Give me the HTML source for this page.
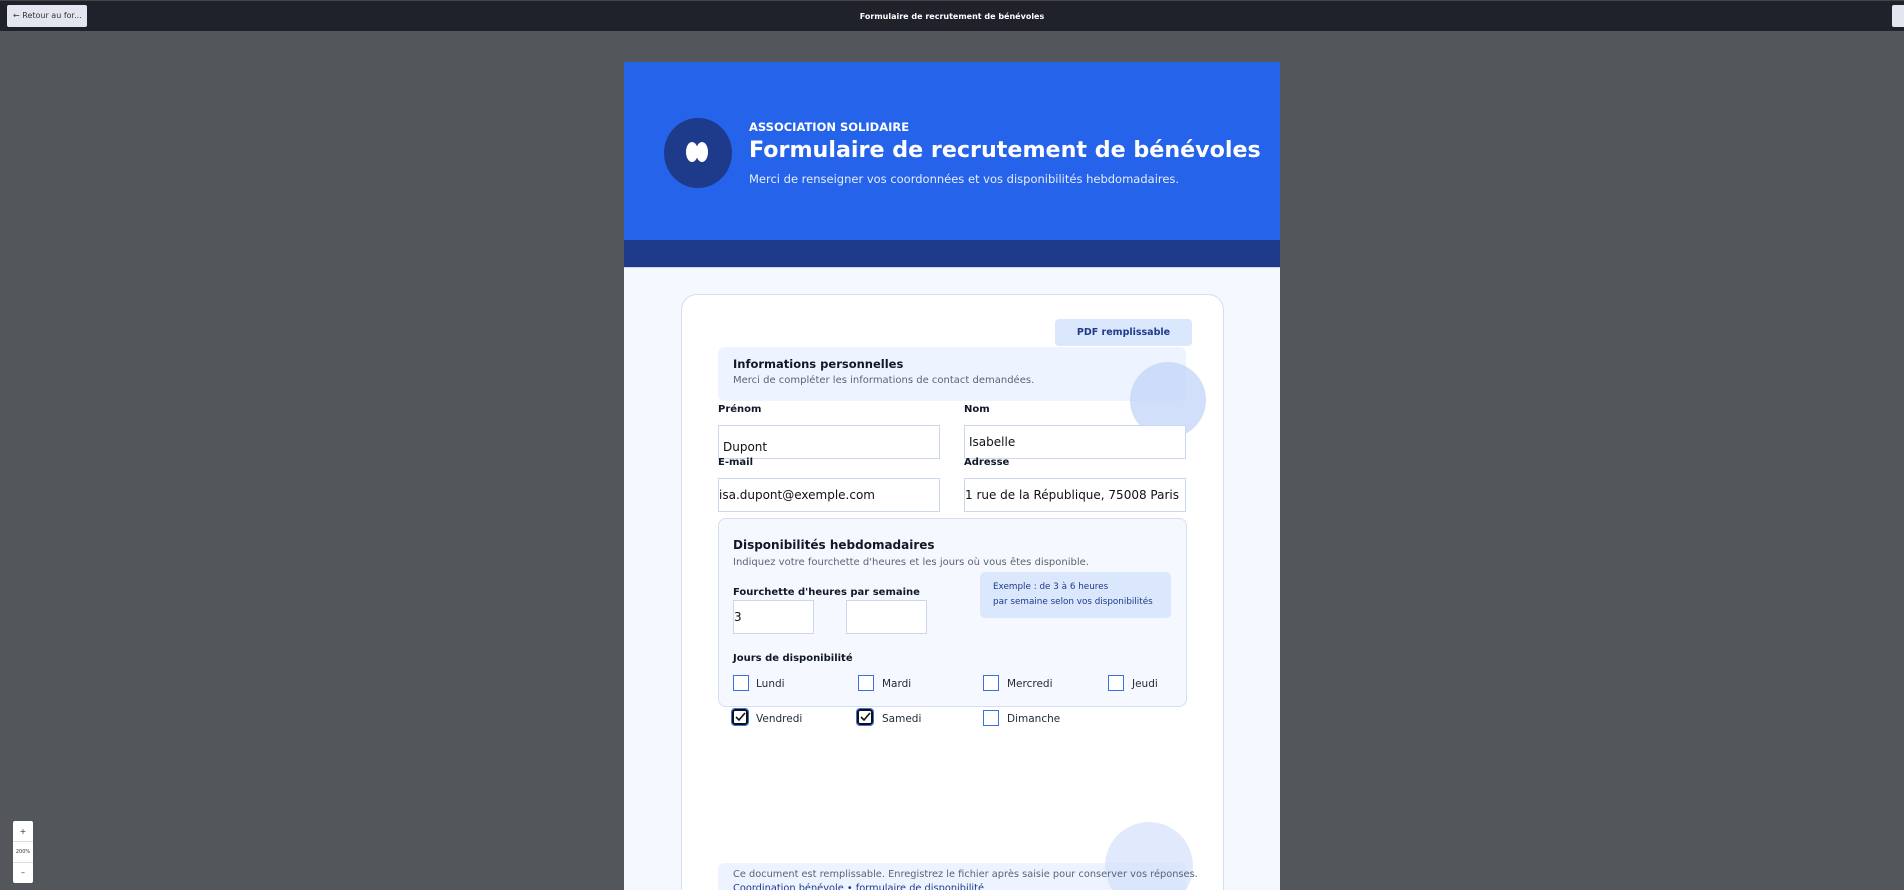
<!DOCTYPE html>
<html><head><meta charset="utf-8"><style>
*{box-sizing:border-box;margin:0;padding:0}
html{width:1904px;height:890px;overflow:hidden}
body{width:1904px;height:890px;overflow:hidden;background:#53575b;font-family:"DejaVu Sans","Liberation Sans",sans-serif;position:relative}
.a{position:absolute}
.top{left:0;top:0;width:1904px;height:31px;background:#1f222a;border-top:1px solid #444}
.lbl{font-size:10px;font-weight:bold;color:#111827}
.inp{background:#fff;border:1.5px solid #c9d7f0;font-size:12px;color:#111;display:flex;align-items:center;padding-left:4px}
.cb{width:16px;height:16px;border:1.5px solid #3b6fe8;background:#fff}
.cbc{border:2px solid #111;border-radius:3px;outline:1px solid #3b6fe8}
.cl{font-size:10.5px;color:#1f2937}
</style></head><body>
<div class="a top"></div>
<div class="a" style="left:7px;top:5px;width:80px;height:22px;background:#e3e6f0;border-radius:2px;font-size:8px;color:#333;padding:6px 0 0 6px">← Retour au for...</div>
<div class="a" style="left:0;width:1904px;top:12px;text-align:center;color:#fff;font-size:8px;font-weight:bold">Formulaire de recrutement de bénévoles</div>
<div class="a" style="left:1892px;top:5px;width:14px;height:22px;background:#e3e6f0;border-radius:2px"></div>

<div class="a" style="left:624px;top:62px;width:656px;height:828px;background:#f5f8fe"></div>
<div class="a" style="left:624px;top:62px;width:656px;height:178px;background:#2563eb"></div>
<div class="a" style="left:624px;top:240px;width:656px;height:28px;background:#1e3a8a;border-bottom:1px solid #c9d7f0"></div>
<div class="a" style="left:664px;top:118px;width:68px;height:70px;border-radius:50%;background:#1e3a8a"></div>
<div class="a" style="left:686px;top:142px;width:12px;height:20px;border-radius:50%;background:#fff"></div>
<div class="a" style="left:696px;top:142px;width:12px;height:20px;border-radius:50%;background:#fff"></div>
<div class="a" style="left:749px;top:120px;color:#fff;font-size:11.5px;font-weight:bold">ASSOCIATION SOLIDAIRE</div>
<div class="a" style="left:749px;top:137px;color:#fff;font-size:22.2px;font-weight:bold;white-space:nowrap">Formulaire de recrutement de bénévoles</div>
<div class="a" style="left:749px;top:172px;color:#e8eefc;font-size:11.5px;white-space:nowrap">Merci de renseigner vos coordonnées et vos disponibilités hebdomadaires.</div>

<div class="a" style="left:681px;top:294px;width:543px;height:620px;background:#fff;border:1.5px solid #d3dff3;border-radius:16px"></div>
<div class="a" style="left:1055px;top:319px;width:137px;height:27px;background:#dbe7fd;border-radius:4px;color:#1e3a8a;font-size:9.5px;font-weight:bold;text-align:center;line-height:27px">PDF remplissable</div>
<div class="a" style="left:718px;top:347px;width:468px;height:54px;background:#eef4ff;border-radius:6px"></div>
<div class="a" style="left:1130px;top:362px;width:76px;height:76px;border-radius:50%;background:rgba(190,210,248,.7)"></div>
<div class="a" style="left:733px;top:357px;font-size:11.5px;font-weight:bold;color:#111827">Informations personnelles</div>
<div class="a" style="left:733px;top:375px;font-size:10px;color:#5b6475">Merci de compléter les informations de contact demandées.</div>

<div class="a lbl" style="left:718px;top:404px">Prénom</div>
<div class="a lbl" style="left:964px;top:404px">Nom</div>
<div class="a inp" style="left:718px;top:425px;width:222px;height:34px;padding-top:10px">Dupont</div>
<div class="a inp" style="left:964px;top:425px;width:222px;height:34px">Isabelle</div>
<div class="a lbl" style="left:718px;top:457px">E-mail</div>
<div class="a lbl" style="left:964px;top:457px">Adresse</div>
<div class="a inp" style="left:718px;top:478px;width:222px;height:34px;padding-left:0">isa.dupont@exemple.com</div>
<div class="a inp" style="left:964px;top:478px;width:222px;height:34px;padding-left:0">1 rue de la République, 75008 Paris</div>

<div class="a" style="left:718px;top:518px;width:469px;height:189px;background:#f5f8fe;border:1.5px solid #d3dff3;border-radius:8px"></div>
<div class="a" style="left:733px;top:538px;font-size:12px;font-weight:bold;color:#111827">Disponibilités hebdomadaires</div>
<div class="a" style="left:733px;top:557px;font-size:10px;color:#5b6475">Indiquez votre fourchette d'heures et les jours où vous êtes disponible.</div>
<div class="a" style="left:980px;top:572px;width:191px;height:46px;background:#dbe7fd;border-radius:5px;color:#1e3a8a;font-size:8.8px;line-height:14.5px;padding:8px 0 0 13px">Exemple : de 3 à 6 heures<br>par semaine selon vos disponibilités</div>
<div class="a lbl" style="left:733px;top:587px">Fourchette d'heures par semaine</div>
<div class="a inp" style="left:733px;top:600px;width:81px;height:34px;padding-left:0">3</div>
<div class="a inp" style="left:846px;top:600px;width:81px;height:34px"></div>
<div class="a lbl" style="left:733px;top:653px">Jours de disponibilité</div>

<div class="a cb" style="left:733px;top:675px"></div><div class="a cl" style="left:756px;top:678px">Lundi</div>
<div class="a cb" style="left:858px;top:675px"></div><div class="a cl" style="left:882px;top:678px">Mardi</div>
<div class="a cb" style="left:983px;top:675px"></div><div class="a cl" style="left:1007px;top:678px">Mercredi</div>
<div class="a cb" style="left:1108px;top:675px"></div><div class="a cl" style="left:1132px;top:678px">Jeudi</div>
<div class="a cb cbc" style="left:732px;top:709px"><svg width="14" height="14" viewBox="0 0 14 14" style="position:absolute;left:-1px;top:-1px"><path d="M3 7l3 3 6-7" fill="none" stroke="#111" stroke-width="1.6"/></svg></div><div class="a cl" style="left:756px;top:713px">Vendredi</div>
<div class="a cb cbc" style="left:857px;top:709px"><svg width="14" height="14" viewBox="0 0 14 14" style="position:absolute;left:-1px;top:-1px"><path d="M3 7l3 3 6-7" fill="none" stroke="#111" stroke-width="1.6"/></svg></div><div class="a cl" style="left:882px;top:713px">Samedi</div>
<div class="a cb" style="left:983px;top:710px"></div><div class="a cl" style="left:1007px;top:713px">Dimanche</div>

<div class="a" style="left:718px;top:863px;width:468px;height:40px;background:#eef4ff;border-radius:6px"></div>
<div class="a" style="left:1105px;top:822px;width:88px;height:88px;border-radius:50%;background:rgba(205,220,250,.6)"></div>
<div class="a" style="left:733px;top:869px;font-size:9.8px;color:#5b6475;white-space:nowrap">Ce document est remplissable. Enregistrez le fichier après saisie pour conserver vos réponses.</div>
<div class="a" style="left:733px;top:883px;font-size:9.8px;color:#1e3a8a;white-space:nowrap">Coordination bénévole • formulaire de disponibilité</div>

<div class="a" style="left:13px;top:821px;width:20px;height:62px;background:#fff;border-radius:2px;font-size:8px;color:#333;text-align:center">
<div style="height:21px;line-height:21px;border-bottom:1px solid #ddd">+</div><div style="height:21px;line-height:21px;font-size:5px;border-bottom:1px solid #ddd">200%</div><div style="line-height:20px">–</div></div>
</body></html>
